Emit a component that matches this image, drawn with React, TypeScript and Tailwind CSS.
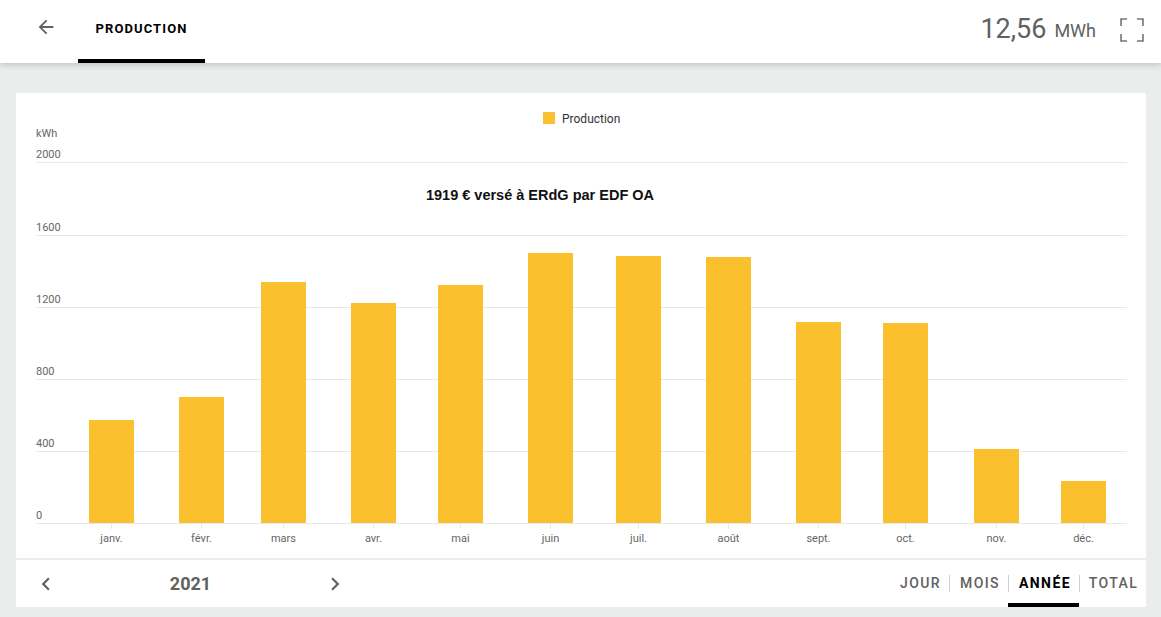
import React from "react";

const bars = [
  { m: "janv.", x: 73, top: 327 },
  { m: "févr.", x: 163, top: 304 },
  { m: "mars", x: 245, top: 189 },
  { m: "avr.", x: 335, top: 210 },
  { m: "mai", x: 422, top: 192 },
  { m: "juin", x: 512, top: 160 },
  { m: "juil.", x: 600, top: 163 },
  { m: "août", x: 690, top: 164 },
  { m: "sept.", x: 780, top: 229 },
  { m: "oct.", x: 867, top: 230 },
  { m: "nov.", x: 958, top: 356 },
  { m: "déc.", x: 1045, top: 388 },
];

const grid = [
  { v: "2000", y: 69 },
  { v: "1600", y: 142 },
  { v: "1200", y: 214 },
  { v: "800", y: 286 },
  { v: "400", y: 358 },
  { v: "0", y: 430 },
];

function Chart() {
  return (
    <svg width="1130" height="465" viewBox="0 0 1130 465" className="block">
      <g fontFamily="Roboto, 'Liberation Sans', sans-serif" fontSize="11" fill="#666666">
        <text x="20" y="44">kWh</text>
        {grid.map((g) => (
          <g key={g.v}>
            <line x1="20" x2="1111" y1={g.y + 0.5} y2={g.y + 0.5} stroke="#e8e8e8" strokeWidth="1" />
            <text x="20" y={g.y - 4}>{g.v}</text>
          </g>
        ))}
      </g>
      <rect x="527" y="19" width="12" height="12" fill="#fbc02d" />
      <text x="546" y="29.5" fontFamily="Roboto, 'Liberation Sans', sans-serif" fontSize="12" fill="#333333">
        Production
      </text>
      <text
        x="524"
        y="107"
        textAnchor="middle"
        fontFamily="'Liberation Sans', Arial, sans-serif"
        fontSize="14.5"
        fontWeight="bold"
        fill="#111111"
      >
        1919 € versé à ERdG par EDF OA
      </text>
      {bars.map((b) => (
        <g key={b.m}>
          <rect x={b.x} y={b.top} width="45" height={430 - b.top} fill="#fbc02d" />
          <line x1={b.x + 22.5} x2={b.x + 22.5} y1="430" y2="436" stroke="#e8e8e8" strokeWidth="1" />
          <text
            x={b.x + 22.5}
            y="449"
            textAnchor="middle"
            fontFamily="Roboto, 'Liberation Sans', sans-serif"
            fontSize="11"
            fill="#666666"
          >
            {b.m}
          </text>
        </g>
      ))}
    </svg>
  );
}

function Sep() {
  return (
    <div className="flex items-center">
      <div className="w-px h-[17px] bg-[#d0d0d0]" />
    </div>
  );
}

export default function App() {
  return (
    <div
      className="w-[1161px] h-[617px] bg-[#ebecec] flex flex-col overflow-hidden"
      style={{ fontFamily: "Roboto, 'Liberation Sans', sans-serif" }}
    >
      <header className="relative z-10 h-[63px] bg-white flex items-stretch shadow-[0_2px_6px_rgba(0,0,0,0.18)] shrink-0">
        <div className="w-[78px] flex items-center pl-[35px]">
          <svg width="22" height="22" viewBox="0 0 24 24" className="-mt-[10px]">
            <path d="M20 11H7.83l5.59-5.59L12 4l-8 8 8 8 1.41-1.41L7.83 13H20v-2z" fill="#616161" />
          </svg>
        </div>
        <div className="w-[127px] flex flex-col justify-between">
          <div className="flex-1 flex items-center justify-center">
            <span className="text-[13px] font-bold tracking-[1.1px] text-black -mt-[1px]">PRODUCTION</span>
          </div>
          <div className="h-[4px] bg-black" />
        </div>
        <div className="flex-1" />
        <div className="flex items-center pr-[17px] -mt-[5px]">
          <span className="text-[27px] text-[#616161] leading-none">12,56</span>
          <span className="text-[18px] text-[#616161] ml-[8px] mt-[4px] leading-none">MWh</span>
          <svg width="24" height="24" viewBox="0 0 24 24" className="ml-[24px] mt-[1px]">
            <path
              d="M1 8V1h6M17 1h6v7M23 16v7h-6M7 23H1v-7"
              fill="none"
              stroke="#757575"
              strokeWidth="1.6"
            />
          </svg>
        </div>
      </header>
      <main className="flex-1 pt-[30px] pl-[16px] pr-[15px] flex flex-col">
        <div className="h-[465px] bg-white">
          <Chart />
        </div>
        <div className="h-[47px] mt-[2px] bg-white flex items-stretch">
          <div className="flex items-center w-[340px]">
            <svg width="26" height="26" viewBox="0 0 24 24" className="ml-[17px]">
              <path d="M15.41 7.41L14 6l-6 6 6 6 1.41-1.41L10.83 12z" fill="#616161" />
            </svg>
            <span className="flex-1 text-center text-[18px] font-bold text-[#616161] -mt-[1px]">2021</span>
            <svg width="26" height="26" viewBox="0 0 24 24" className="mr-[8px]">
              <path d="M10 6L8.59 7.41 13.17 12l-4.58 4.59L10 18l6-6z" fill="#616161" />
            </svg>
          </div>
          <div className="flex-1" />
          <div className="flex items-stretch text-[14px] tracking-[1.4px]">
            <div className="w-[59px] flex items-center justify-center pl-[2px] text-[#616161] font-medium">JOUR</div>
            <Sep />
            <div className="w-[58px] flex items-center justify-center pl-[2px] text-[#616161] font-medium">MOIS</div>
            <Sep />
            <div className="relative w-[70px] flex items-center justify-center pl-[2px] text-black font-bold">
              ANNÉE
              <div className="absolute -left-px right-0 bottom-0 h-[4px] bg-black" />
            </div>
            <Sep />
            <div className="w-[66px] flex items-center justify-center pl-[1px] text-[#616161] font-medium">TOTAL</div>
          </div>
        </div>
      </main>
    </div>
  );
}
